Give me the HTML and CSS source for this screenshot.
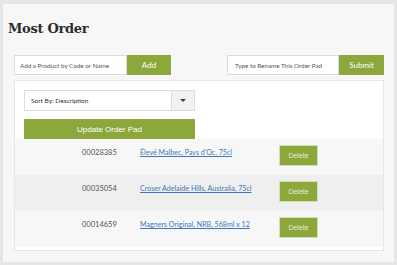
FILE: index.html
```html
<!DOCTYPE html>
<html lang="en">
<head>
    <meta charset="UTF-8">
    <title>Most Order</title>
    <link rel="stylesheet" href="styles.css">
</head>
<body>
    <div class="panel">
        <h1>Most Order</h1>
        <div class="content">
            <div class="toolbar">
                <form class="field">
                    <input type="text" placeholder="Add a Product by Code or Name">
                    <button type="button">Add</button>
                </form>
                <form class="field rename">
                    <input type="text" placeholder="Type to Rename This Order Pad">
                    <button type="button">Submit</button>
                </form>
            </div>
            <div class="box">
                <div class="controls">
                    <div class="select">
                        <span class="select-label">Sort By: Description</span>
                        <span class="select-arrow"></span>
                    </div>
                    <button type="button" class="update">Update Order Pad</button>
                </div>
                <div class="row">
                    <span class="code">00028385</span>
                    <a href="#" class="name">Élevé Malbec, Pays d'Oc, 75cl</a>
                    <button type="button" class="delete">Delete</button>
                </div>
                <div class="row alt">
                    <span class="code">00035054</span>
                    <a href="#" class="name">Croser Adelaide Hills, Australia, 75cl</a>
                    <button type="button" class="delete">Delete</button>
                </div>
                <div class="row">
                    <span class="code">00014659</span>
                    <a href="#" class="name">Magners Original, NRB, 568ml x 12</a>
                    <button type="button" class="delete">Delete</button>
                </div>
            </div>
        </div>
    </div>
</body>
</html>
```

FILE: styles.css
```css
body {
    margin: 0;
    padding: 4px 3px 3px 3px;
    background-color: #e6e6e6;
    font-family: Lato, "Liberation Sans", sans-serif;
}
.panel {
    background-color: #f7f7f7;
    height: 258px;
}
h1 {
    margin: 0;
    padding: 15px 0 0 5px;
    height: 36px;
    font-family: "DejaVu Serif", serif;
    font-size: 13px;
    line-height: 20px;
    font-weight: bold;
    color: #2b2b2b;
    letter-spacing: -0.3px;
}
.content {
    padding: 0 10px 0 11px;
}
.toolbar {
    display: flex;
    justify-content: space-between;
    height: 20px;
}
.field {
    display: flex;
    margin: 0;
}
.field input {
    width: 113px;
    height: 20px;
    box-sizing: border-box;
    border: 1px solid #dcdcdc;
    background-color: #fff;
    padding: 0 5px;
    font-family: Lato, sans-serif;
    font-size: 6.3px;
    outline: none;
}
.field input::placeholder {
    color: #555;
}
.field button {
    width: 44px;
    height: 20px;
    border: none;
    background-color: #8ca83c;
    color: #fff;
    font-family: Lato, sans-serif;
    font-size: 8px;
}
.rename input {
    width: 112px;
    padding-left: 7px;
}
.rename button {
    width: 45px;
}
.box {
    margin-top: 5px;
    height: 169px;
    border: 1px solid #e6e6e6;
    background-color: #fff;
}
.controls {
    padding: 9px 9px 0 9px;
    display: flex;
    flex-direction: column;
    gap: 8px;
}
.select {
    width: 171px;
    height: 21px;
    box-sizing: border-box;
    border: 1px solid #dcdcdc;
    display: flex;
    align-items: center;
}
.select-label {
    flex: 1;
    padding-left: 6px;
    font-size: 6.5px;
    color: #333;
}
.select-arrow {
    width: 22px;
    height: 19px;
    background-color: #f2f2f2;
    border-left: 1px solid #dcdcdc;
    display: flex;
    align-items: center;
    justify-content: center;
}
.select-arrow::after {
    content: "";
    border-left: 3px solid transparent;
    border-right: 3px solid transparent;
    border-top: 3px solid #444;
}
.update {
    width: 171px;
    height: 20px;
    border: none;
    background-color: #8ca83c;
    color: #fff;
    font-family: "Liberation Sans", sans-serif;
    font-size: 8px;
}
.row {
    height: 36px;
    box-sizing: border-box;
    padding: 6px 0 0 67px;
    display: flex;
    align-items: flex-start;
    background-color: #f7f7f7;
}
.row.alt {
    background-color: #efefef;
}
.code {
    width: 58px;
    padding-top: 3px;
    font-size: 7.5px;
    color: #555;
}
.name {
    width: 139px;
    padding-top: 3px;
    font-size: 7.1px;
    color: #3d78bd;
}
.delete {
    width: 39px;
    height: 21px;
    border: 1px solid #d4ddb4;
    background-color: #8ca83c;
    color: #e6ecd2;
    font-family: "Liberation Sans", sans-serif;
    font-size: 7px;
}
```
